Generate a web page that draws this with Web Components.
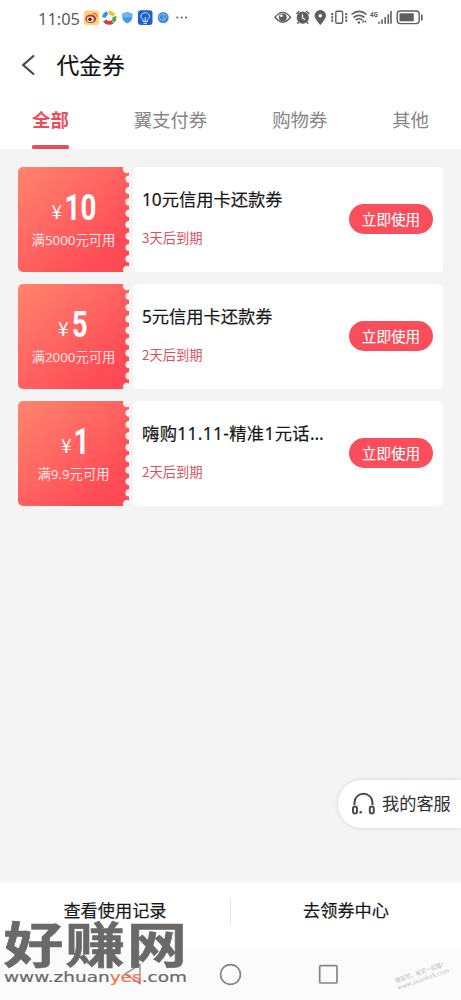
<!DOCTYPE html>
<html lang="zh-CN">
<head>
<meta charset="utf-8">
<title>代金券</title>
<style>
html,body{margin:0;padding:0}
body{width:461px;height:1000px;overflow:hidden;font-family:"Noto Sans CJK SC","Noto Sans",sans-serif;color:#222}
</style>
</head>
<body>
<voucher-app></voucher-app>
<script>
function define(name, html) {
  const t = document.createElement('template');
  t.innerHTML = html;
  customElements.define(name, class extends HTMLElement {
    constructor() {
      super();
      this.attachShadow({mode: 'open'}).appendChild(t.content.cloneNode(true));
    }
    connectedCallback() {
      this.shadowRoot.querySelectorAll('[data-x]').forEach(e => e.setAttribute('x', this.getAttribute(e.dataset.x)));
      this.shadowRoot.querySelectorAll('[data-from]').forEach(e => {
        e.textContent = this.getAttribute(e.dataset.from);
      });
    }
  });
}

define('status-bar', `
<style>
:host{display:block;height:36px}
svg{display:block}
text{font-family:"Noto Sans",sans-serif;fill:#5c5c5c}
</style>
<svg width="461" height="36" viewBox="0 0 461 36">
  <text x="38" y="24.500" font-size="17" textLength="42" lengthAdjust="spacingAndGlyphs">11:05</text>
  <rect x="84" y="10.500" width="15" height="14.500" rx="3" fill="#fbd27a"/>
  <ellipse cx="90.800" cy="18.800" rx="5.400" ry="4.300" fill="#c9382d"/>
  <ellipse cx="90.300" cy="19.200" rx="3.400" ry="2.600" fill="#fff"/>
  <circle cx="90" cy="19.300" r="1.800" fill="#3a1b18"/>
  <path d="M93 13.500q4-.5 4 3.500" fill="none" stroke="#e8762c" stroke-width="1.300"/>
  <g fill="none" stroke-width="3.800">
    <path d="M104 17.500a5.200 5.200 0 0 1 3.500-4.500" stroke="#2b9be0"/>
    <path d="M108.500 12.700a5.200 5.200 0 0 1 5.200 3" stroke="#f2c230"/>
    <path d="M114.400 16.500a5.200 5.200 0 0 1-1.500 5" stroke="#43ad56"/>
    <path d="M112.500 21.700a5.200 5.200 0 0 1-7.800-1.200" stroke="#dc3b41"/>
  </g>
  <path d="M127.300 12l5 1.700v3.800c0 2.600-2 4.400-5 5.900-3-1.500-5-3.300-5-5.900v-3.800z" fill="#4599e3"/>
  <path d="M127.300 12l5 1.700v3.800h-10v-3.800z" fill="#68b6ef"/>
  <rect x="138" y="10.300" width="14.500" height="14.700" rx="3" fill="#1e5fcb"/>
  <path d="M143 19.500c-2.300-1.500-2.500-3-1.800-4.500 1.500-3 6.500-3 8 0 .7 1.500.5 3-1.800 4.500v2h-4.400zM143.500 23.300h3.500M145.200 21v-4" fill="none" stroke="#d5e8ff" stroke-width="1"/>
  <circle cx="163.200" cy="17.600" r="5.500" fill="#3d86d8"/>
  <path d="M159 16l4-2.500 4 3-3 4-4-1zM163 13.500l1 7" fill="none" stroke="#8bc0f3" stroke-width=".9"/>
  <g fill="#666"><circle cx="177.300" cy="17.500" r="1.100"/><circle cx="181.700" cy="17.500" r="1.100"/><circle cx="186.100" cy="17.500" r="1.100"/></g>
  <g fill="none" stroke="#5f5f5f" stroke-width="1.400">
    <path d="M275 17.300q7.800-9.800 15.500 0-7.700 9.800-15.500 0z"/>
    <circle cx="282.800" cy="17.300" r="3.900" fill="#5f5f5f" stroke="none"/>
    <circle cx="281.400" cy="15.800" r="1.300" fill="#fff" stroke="none"/>
    <circle cx="302.800" cy="17.600" r="5.400" fill="#5f5f5f"/>
    <path d="M296.300 14l3-3M309.300 14l-3-3M298.500 22l-1 1.800M307 22l1 1.800"/>
    <path d="M302.500 14.200v3.800l2.600 1.600" stroke="#fff" stroke-width="1.200"/>
    <path d="M320.300 24c-2.700-3.500-5-5.500-5-8.200a5 5 0 0 1 10 0c0 2.700-2.300 4.700-5 8.200z" fill="#5f5f5f"/>
    <circle cx="320.300" cy="15.700" r="1.700" fill="#fff" stroke="none"/>
    <rect x="335.800" y="11.300" width="6.800" height="11.900" rx="1.300"/>
    <path d="M332.200 13v9M346.200 13v9" stroke-width="2" stroke-dasharray="2.200 1.100"/>
    <path d="M351.500 14.500q7.700-6.200 15 0M353.500 17.500q5.500-4.200 11 0M355.700 20q3.300-2.400 6.500 0" stroke-width="1.600"/>
    <circle cx="358.900" cy="22.500" r="1.200" fill="#5f5f5f" stroke="none"/>
    <path d="M362.300 21.500h4" stroke-width="2" stroke-dasharray="1.600 .7"/>
    <path d="M379 21.800v2M382 19.500v4.300M385.200 17v6.800M388.300 14.300v9.500M391 11v12.800" stroke-width="1.600"/>
    <rect x="397.200" y="11" width="22" height="12.600" rx="3"/>
    <path d="M421.800 14.500v6" stroke-width="1.700"/>
    <rect x="399.500" y="13.300" width="14.300" height="8" fill="#5f5f5f" stroke="none"/>
  </g>
  <text x="370" y="17" font-size="7.500" font-weight="700" textLength="8" lengthAdjust="spacingAndGlyphs">4G</text>
</svg>`);

define('page-header', `
<style>
:host{display:flex;align-items:center;height:58px;padding-left:21px;gap:20.500px;box-sizing:border-box}
h1{margin:0;font-size:22.800px;line-height:30px;font-weight:400;color:#111;-webkit-text-stroke:.15px #111}
</style>
<svg width="15" height="22" viewBox="0 0 15 22"><path d="M13 1.500L2.200 11 13 20.500" fill="none" stroke="#4c4c4c" stroke-width="2.300"/></svg>
<h1><slot></slot></h1>`);

define('tab-item', `
<style>
:host{display:flex;flex-direction:column;justify-content:space-between;height:55px;font-size:18.400px;line-height:50px;color:#858585;white-space:nowrap}
i{display:block;height:4px;border-radius:1.500px}
:host([active]){color:#ea4e5c;font-weight:700}
:host([active]) i{background:#e84c5b}
</style>
<span><slot></slot></span><i></i>`);

define('tab-bar', `
<style>:host{display:flex;height:55px;justify-content:space-between;padding:0 32px 0 32px}</style>
<slot></slot>`);

define('use-button', `
<style>
:host{display:block}
button{display:block;width:84px;height:30px;padding:0 0 1px;border:0;border-radius:15px;background:#fa4e5c;color:#fff;font:400 14.600px/28px "Noto Sans CJK SC",sans-serif;-webkit-text-stroke:.12px #fff}
</style>
<button><slot></slot></button>`);

define('coupon-card', `
<style>
:host{display:grid;grid-template-columns:111px 310px;column-gap:4px;height:105px}
svg{display:block}
text{fill:#fff}
.card{display:flex;align-items:center;justify-content:space-between;background:#fff;border-radius:5px;padding:0 10px 0 9px}
.info{display:flex;flex-direction:column;gap:16px;padding-bottom:4px}
.title{font-family:"Noto Sans","Noto Sans CJK SC",sans-serif;font-size:17.250px;line-height:25px;height:25px;font-weight:400;color:#181818;-webkit-text-stroke:.2px #181818;white-space:nowrap}
:host([wide]) .title{letter-spacing:.38px}
.exp{font-size:13.300px;line-height:20px;color:#d9505c}
</style>
<svg width="111" height="105" viewBox="0 0 111 105">
  <defs>
    <linearGradient id="g" x1="0" y1="0" x2="1" y2="1"><stop offset="0" stop-color="#ff846d"/><stop offset=".35" stop-color="#ff6c64"/><stop offset=".8" stop-color="#ff4c56"/><stop offset="1" stop-color="#ff4854"/></linearGradient>
  </defs>
  <path fill="url(#g)" d="M5 0H105.500A4 4 0 0 0 111 5.500V8.500a3.600 3.600 0 0 0 0 7.200V19.900a3.600 3.600 0 0 0 0 7.200V31.300a3.600 3.600 0 0 0 0 7.200V42.700a3.600 3.600 0 0 0 0 7.200V54.100a3.600 3.600 0 0 0 0 7.200V65.500a3.600 3.600 0 0 0 0 7.200V76.900a3.600 3.600 0 0 0 0 7.200V88.300a3.600 3.600 0 0 0 0 7.200V99.500A4 4 0 0 0 105.500 105H5A5 5 0 0 1 0 100V5A5 5 0 0 1 5 0z"/>
  <text data-x="yen-x" y="52.300" font-family="Noto Sans CJK SC" font-size="19">¥</text>
  <g transform="scale(.74 1)"><text data-x="amount-x" data-from="amount" y="53" font-family="Roboto" font-size="37.500" font-weight="700"></text></g>
  <text x="55.500" y="77.700" text-anchor="middle" font-family="Noto Sans, Noto Sans CJK SC" font-size="13.350" fill-opacity=".86" data-from="limit"></text>
</svg>
<div class="card"><div class="info"><div class="title" data-from="name"></div><div class="exp" data-from="expires"></div></div><use-button>立即使用</use-button></div>`);

define('service-button', `
<style>
:host{display:flex;align-items:center;gap:6px;box-sizing:border-box;height:48px;width:123px;padding-left:13px;background:#fff;border-radius:24px 0 0 24px;box-shadow:0 0 5px #0002;font-size:17.200px;line-height:24px;color:#303030;white-space:nowrap}
svg{flex:none}span{padding-bottom:2px}
</style>
<svg width="25" height="24" viewBox="0 0 25 24"><g fill="none" stroke="#4b4b4b" stroke-width="2"><path d="M3.500 13V10.500a9 8.700 0 0 1 18 0V13"/><rect x="2" y="14.500" width="4" height="7" rx="2"/><rect x="18.800" y="14.500" width="4" height="7" rx="2"/></g><circle cx="9.700" cy="20.300" r="1.300" fill="#4b4b4b"/></svg>
<span><slot></slot></span>`);

define('bottom-actions', `
<style>
:host{display:grid;grid-template-columns:230px 1px 230px;align-items:center;height:66px;background:#fff;font-size:17.200px;line-height:26px;color:#181818;-webkit-text-stroke:.2px #181818;text-align:center}
i{height:25px;background:#e3e3e3}
div{padding-bottom:11px}i{margin-bottom:8px}
</style>
<div><slot name="history"></slot></div><i></i><div><slot name="center"></slot></div>`);

define('system-nav', `
<style>:host{display:block;height:52px;background:#fbfbfb}svg{display:block}</style>
<svg width="461" height="52" viewBox="0 0 461 52"><g fill="none" stroke="#858585" stroke-width="1.700"><path d="M140 16.500v19L125 26z" stroke-width="1.300"/><circle cx="230.500" cy="26.500" r="9.900"/><rect x="319.700" y="17.700" width="17.300" height="17.300" rx="1"/></g></svg>`);

define('site-watermark', `
<style>:host{display:block}svg{display:block}</style>
<svg width="461" height="100" viewBox="0 -10 461 100">
  <g transform="translate(3.500 53.300) scale(1.260 1.020)"><text x="0" y="0" font-family="Noto Sans CJK SC" font-size="47.500" font-weight="700" fill="#696969" stroke="#696969" stroke-width=".6" letter-spacing="1.500">好赚网</text></g>
  <text x="4" y="71.500" font-family="DejaVu Sans" font-size="14" textLength="183" lengthAdjust="spacingAndGlyphs" fill="#696969" stroke="#696969" stroke-width=".2">www.zhuan<tspan fill="#f96f50" stroke="#f96f50">yes</tspan>.com</text>
  <g transform="rotate(-19 397 76)" font-family="Noto Sans CJK SC" fill="#c2c2c2"><text x="397" y="73" font-size="6.500" textLength="54" lengthAdjust="spacingAndGlyphs">赚客吧，有奖一起赚！</text><text x="397" y="80" font-size="6" textLength="54" lengthAdjust="spacingAndGlyphs">www.zuanke8.com</text></g>
</svg>`);

define('voucher-app', `
<style>
:host{display:flex;flex-direction:column;position:relative;width:461px;height:1000px;background:#fff;overflow:hidden}
main{flex:1;background:#f4f4f4;padding:17.500px 18px 0;display:flex;flex-direction:column;gap:12px}
status-bar,page-header,tab-bar,bottom-actions,system-nav{flex:none}
service-button{position:absolute;right:0;top:780px}
site-watermark{position:absolute;left:0;top:900px}
</style>
<status-bar></status-bar>
<page-header>代金券</page-header>
<tab-bar><tab-item active>全部</tab-item><tab-item>翼支付券</tab-item><tab-item>购物券</tab-item><tab-item>其他</tab-item></tab-bar>
<main>
  <coupon-card amount="10" amount-x="63" yen-x="33.500" limit="满5000元可用" name="10元信用卡还款券" expires="3天后到期"></coupon-card>
  <coupon-card amount="5" amount-x="72.500" yen-x="40" limit="满2000元可用" name="5元信用卡还款券" expires="2天后到期"></coupon-card>
  <coupon-card wide amount="1" amount-x="75" yen-x="43" limit="满9.9元可用" name="嗨购11.11-精准1元话…" expires="2天后到期"></coupon-card>
</main>
<bottom-actions><span slot="history">查看使用记录</span><span slot="center">去领券中心</span></bottom-actions>
<system-nav></system-nav>
<service-button>我的客服</service-button>
<site-watermark></site-watermark>`);
</script>
</body>
</html>
